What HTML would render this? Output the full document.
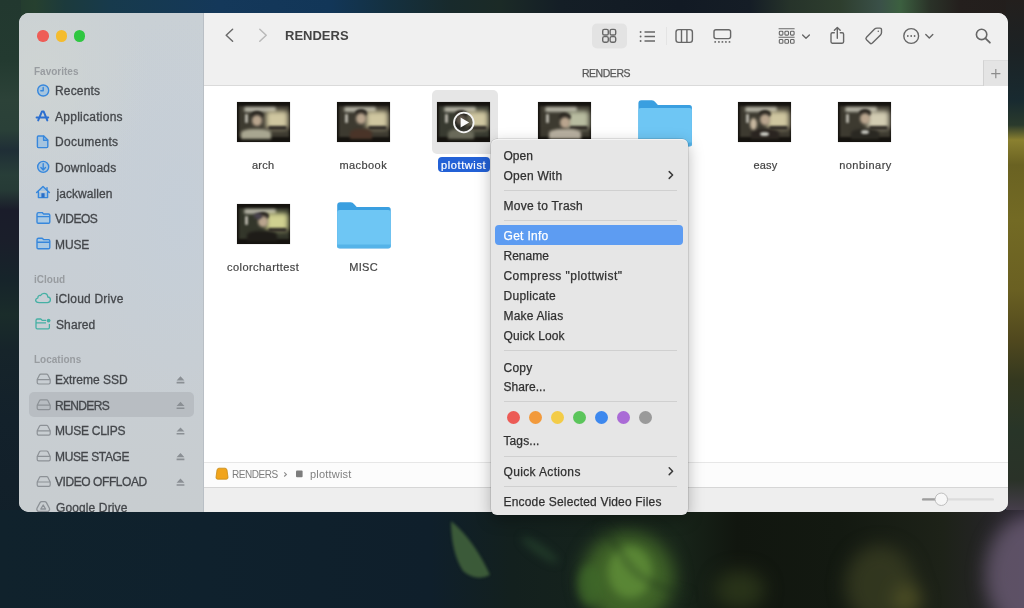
<!DOCTYPE html>
<html><head><meta charset="utf-8">
<style>
*{margin:0;padding:0;box-sizing:border-box}
html,body{width:1024px;height:608px;overflow:hidden}
body{position:relative;font-family:"Liberation Sans",sans-serif;background:#13222c}
.a{position:absolute}
#bg{position:absolute;left:0;top:0;width:1024px;height:608px;overflow:hidden;background:#13212b}
#bgT{position:absolute;left:0;top:0;width:1024px;height:16px;background:linear-gradient(90deg,#22382f 0px,#26402f 35px,#1c3a3c 65px,#173a4c 110px,#14385a 220px,#123658 330px,#14303f 390px,#182a2c 450px,#1b2a26 500px,#141e26 560px,#121a24 680px,#151d26 750px,#26332a 790px,#2e3e2e 840px,#3a5048 880px,#3c6040 900px,#2a3228 930px,#241f1d 960px,#221e1c 1024px)}
#bgL{position:absolute;left:0;top:0;width:21px;height:608px;background:linear-gradient(180deg,#22382f 0px,#233a30 60px,#2c4238 100px,#2a4038 130px,#1f2e36 150px,#283e38 175px,#263a36 190px,#1a1c2a 210px,#1a1e2a 240px,#16242a 280px,#1a2c2a 315px,#16242a 350px,#13212b 420px,#101e28 608px)}
#bgR{position:absolute;left:1006px;top:0;width:18px;height:608px;background:linear-gradient(180deg,#231f1d 0px,#1c2224 50px,#182a30 100px,#2a3a2c 125px,#8a8030 140px,#6a6222 165px,#736a24 220px,#6a6022 290px,#50481e 340px,#34381f 380px,#283528 430px,#2a3228 480px,#4a4050 515px,#5e5068 560px,#4a3e52 608px)}
#bgB{position:absolute;left:0;top:510px;width:1024px;height:98px}
#win{position:absolute;left:19px;top:13px;width:989px;height:499px;border-radius:10px;overflow:hidden;background:#fff;will-change:transform}
#P{position:absolute;left:-19px;top:-13px;width:1024px;height:608px}
#side{position:absolute;left:19px;top:13px;width:185px;height:499px;background:radial-gradient(ellipse 110px 130px at 20px 60px,rgba(208,213,210,.8),rgba(208,213,210,0) 100%),radial-gradient(ellipse 100px 200px at 160px 200px,rgba(196,206,216,.8),rgba(196,206,216,0) 100%),linear-gradient(180deg,#c9d0d5 0%,#c8cfd6 40%,#c8cdd0 100%);border-right:1px solid #b9bfc5}
#tool{position:absolute;left:204px;top:13px;width:804px;height:47px;background:#f0f0f0}
#tabs{position:absolute;left:204px;top:60px;width:804px;height:26px;background:#f0f0f0;border-bottom:1px solid #dadada}
#content{position:absolute;left:204px;top:86px;width:804px;height:376px;background:#fff}
#pathbar{position:absolute;left:204px;top:462px;width:804px;height:25px;background:#fcfcfc;border-top:1px solid #e7e7e7}
#status{position:absolute;left:204px;top:487px;width:804px;height:25px;background:#eeeeee;border-top:1px solid #d6d6d6}
.sh{position:absolute;left:34px;font-size:10px;line-height:12px;font-weight:bold;color:#989ca0;white-space:nowrap}
.si{position:absolute;left:55px;font-size:12px;line-height:14px;color:#44474b;white-space:nowrap;-webkit-text-stroke:.3px #44474b}
.lbl{position:absolute;font-size:11px;line-height:13px;color:#444;white-space:nowrap;-webkit-text-stroke:.2px currentColor}
#menu{will-change:transform;position:absolute;left:491px;top:139px;width:197px;height:376px;background:#e6e6e6;border-radius:6px;box-shadow:inset 0 1px 0 rgba(255,255,255,.55),0 0 0 0.5px rgba(0,0,0,.2),0 5px 16px rgba(0,0,0,.28)}
.mi{position:absolute;left:12.5px;font-size:12px;line-height:14px;color:#303030;white-space:nowrap;-webkit-text-stroke:.25px currentColor}
.sep{position:absolute;left:13px;width:173px;height:1px;background:#d0d0d0}
.thumb{position:absolute;width:53px;height:40px;background:#15130f;overflow:hidden;box-shadow:0 0 1px rgba(0,0,0,.3)}
.thumb b{position:absolute;display:block}
.thumb i{position:absolute;left:0;top:4px;width:54px;height:31px;display:block}
.dot{position:absolute;width:13px;height:13px;border-radius:50%}
.ej{position:absolute;left:176px;width:9px;height:8px}

.t1,.t2,.t3,.t4,.t5,.t6,.t7{background:
 radial-gradient(ellipse 7px 9px at 42% 48%,rgba(205,190,165,.95),rgba(205,190,165,0) 100%),
 radial-gradient(ellipse 13px 11px at 80% 48%,rgba(225,215,160,.95),rgba(225,215,160,0) 100%),
 radial-gradient(ellipse 16px 6px at 35% 22%,rgba(150,150,140,.8),rgba(150,150,140,0) 100%),
 radial-gradient(ellipse 3px 7px at 22% 55%,rgba(190,190,180,.8),rgba(190,190,180,0) 100%),
 linear-gradient(180deg,#2b2a24 0%,#4b4738 45%,#3a3428 80%,#1f1c17 100%)}
</style></head>
<body>
<div id="bg"><div id="bgT"></div><div id="bgL"></div><div id="bgR"></div><svg id="bgB" width="1024" height="98" viewBox="0 510 1024 98">
 <defs><filter id="bl4" x="-50%" y="-50%" width="200%" height="200%" color-interpolation-filters="sRGB"><feGaussianBlur stdDeviation="4"/></filter>
 <filter id="bl15" x="-50%" y="-50%" width="200%" height="200%" color-interpolation-filters="sRGB"><feGaussianBlur stdDeviation="1.6"/></filter>
 <filter id="bl8" x="-50%" y="-50%" width="200%" height="200%" color-interpolation-filters="sRGB"><feGaussianBlur stdDeviation="9"/></filter>
 <linearGradient id="bgbase" x1="0" x2="1" y1="0" y2="0">
  <stop offset="0" stop-color="#10222c"/><stop offset=".2" stop-color="#0f212d"/><stop offset=".42" stop-color="#0f1f2b"/><stop offset=".5" stop-color="#13201e"/>
  <stop offset=".66" stop-color="#18251a"/><stop offset=".72" stop-color="#11160f"/><stop offset=".82" stop-color="#131911"/>
  <stop offset=".92" stop-color="#1d2218"/><stop offset="1" stop-color="#2a2530"/></linearGradient></defs>
 <rect x="0" y="510" width="1024" height="98" fill="url(#bgbase)"/>
 <g filter="url(#bl8)">
  <ellipse cx="628" cy="578" rx="46" ry="46" fill="#48702a" opacity=".85"/>
  <ellipse cx="880" cy="585" rx="35" ry="40" fill="#3d4224" opacity=".7"/><ellipse cx="908" cy="600" rx="14" ry="16" fill="#5a5a28" opacity=".7"/>
  <ellipse cx="1030" cy="575" rx="45" ry="60" fill="#74647e" opacity=".7"/>
  <ellipse cx="740" cy="590" rx="25" ry="20" fill="#2e3a1c" opacity=".8"/>
  
 </g>
 <g filter="url(#bl4)">
  <ellipse cx="630" cy="572" rx="22" ry="26" fill="#6a9c3e" opacity=".6"/>
  
  <ellipse cx="590" cy="585" rx="12" ry="20" fill="#3e6a2a" opacity=".7"/><ellipse cx="540" cy="550" rx="5" ry="22" transform="rotate(-55 540 550)" fill="#2a4a30" opacity=".6"/><path d="M600 528 Q615 540 625 560 Q640 585 690 595" stroke="#1c2e1a" stroke-width="2.5" fill="none" opacity=".8"/>
 </g>
 <path d="M451 521 Q474 540 490 575 Q476 582 463 571 Q451 552 451 521 Z" fill="#3f5e3a" filter="url(#bl15)" opacity=".95"/>
</svg></div>
<div id="win"><div id="P">
 <div id="side"></div>
 <div id="tool"></div>
 <div id="tabs"></div>
 <div id="content"></div>
 <div id="pathbar"></div>
 <div id="status"></div>
 <!-- tab bar -->
 <div class="a" style="left:204px;width:804px;top:67px;text-align:center;font-size:10.5px;line-height:12px;color:#585858;letter-spacing:-.45px;-webkit-text-stroke:.25px #585858">RENDERS</div>
 <div class="a" style="left:983px;top:60px;width:25px;height:26px;background:#e4e4e4;border-left:1px solid #d2d2d2;border-top:1px solid #dcdcdc"></div>


 <div class="a" style="left:29px;top:392px;width:165px;height:25px;border-radius:5px;background:#b8bdc2"></div>
 <!-- thumbnails -->
 <div class="a" style="left:432px;top:90px;width:66px;height:64px;border-radius:5px;background:#e6e6e6"></div>
<div class="thumb" style="left:237px;top:102px"><b style="left:2px;top:4px;width:50px;height:31px;background:#3d3a30;filter:blur(1px)"></b><b style="left:7px;top:5px;width:32px;height:5px;background:#b2b0a2;filter:blur(1.6px);border-radius:2px"></b><b style="left:29px;top:9px;width:22px;height:18px;background:#cfc6a0;filter:blur(2.4px);border-radius:3px"></b><b style="left:31px;top:24px;width:19px;height:4px;background:#34302a;filter:blur(1.2px);border-radius:2px"></b><b style="left:8px;top:12px;width:3px;height:9px;background:#b5b3a8;filter:blur(0.9px);border-radius:1px"></b><b style="left:4px;top:27px;width:30px;height:10px;background:#a8a690;filter:blur(1.6px);border-radius:40% 40% 0 0"></b><b style="left:14px;top:9px;width:12px;height:8px;background:#2a2620;filter:blur(1.3px);border-radius:50%"></b><b style="left:15px;top:13px;width:10px;height:11px;background:#b9a58e;filter:blur(1.4px);border-radius:50%"></b></div>
<div class="thumb" style="left:337px;top:102px"><b style="left:2px;top:4px;width:50px;height:31px;background:#3d3a30;filter:blur(1px)"></b><b style="left:7px;top:5px;width:32px;height:5px;background:#b2b0a2;filter:blur(1.6px);border-radius:2px"></b><b style="left:29px;top:9px;width:22px;height:18px;background:#cfc6a0;filter:blur(2.4px);border-radius:3px"></b><b style="left:31px;top:24px;width:19px;height:4px;background:#34302a;filter:blur(1.2px);border-radius:2px"></b><b style="left:8px;top:12px;width:3px;height:9px;background:#b5b3a8;filter:blur(0.9px);border-radius:1px"></b><b style="left:13px;top:27px;width:22px;height:10px;background:#4a3428;filter:blur(1.6px);border-radius:40% 40% 0 0"></b><b style="left:18px;top:7px;width:12px;height:8px;background:#2a2620;filter:blur(1.3px);border-radius:50%"></b><b style="left:19px;top:11px;width:10px;height:11px;background:#b9a58e;filter:blur(1.4px);border-radius:50%"></b></div>
<div class="thumb" style="left:437px;top:102px"><b style="left:2px;top:4px;width:50px;height:31px;background:#383a30;filter:blur(1px)"></b><b style="left:7px;top:5px;width:32px;height:5px;background:#b2b0a2;filter:blur(1.6px);border-radius:2px"></b><b style="left:29px;top:9px;width:22px;height:18px;background:#cfc6a0;filter:blur(2.4px);border-radius:3px"></b><b style="left:31px;top:24px;width:19px;height:4px;background:#34302a;filter:blur(1.2px);border-radius:2px"></b><b style="left:8px;top:12px;width:3px;height:9px;background:#b5b3a8;filter:blur(0.9px);border-radius:1px"></b><b style="left:11px;top:27px;width:26px;height:10px;background:#6a6a5a;filter:blur(1.6px);border-radius:40% 40% 0 0"></b><b style="left:18px;top:8px;width:12px;height:8px;background:#2a2620;filter:blur(1.3px);border-radius:50%"></b><b style="left:19px;top:12px;width:10px;height:11px;background:#b9a58e;filter:blur(1.4px);border-radius:50%"></b></div>
<div class="thumb" style="left:538px;top:102px"><b style="left:2px;top:4px;width:50px;height:31px;background:#3d3a30;filter:blur(1px)"></b><b style="left:7px;top:5px;width:32px;height:5px;background:#b2b0a2;filter:blur(1.6px);border-radius:2px"></b><b style="left:29px;top:9px;width:22px;height:18px;background:#b8bca0;filter:blur(2.4px);border-radius:3px"></b><b style="left:31px;top:24px;width:19px;height:4px;background:#34302a;filter:blur(1.2px);border-radius:2px"></b><b style="left:8px;top:12px;width:3px;height:9px;background:#b5b3a8;filter:blur(0.9px);border-radius:1px"></b><b style="left:11px;top:27px;width:32px;height:10px;background:#b8b0a0;filter:blur(1.6px);border-radius:40% 40% 0 0"></b><b style="left:21px;top:11px;width:12px;height:8px;background:#2a2620;filter:blur(1.3px);border-radius:50%"></b><b style="left:22px;top:15px;width:10px;height:11px;background:#b9a58e;filter:blur(1.4px);border-radius:50%"></b></div>
<div class="thumb" style="left:738px;top:102px"><b style="left:2px;top:4px;width:50px;height:31px;background:#3d3a30;filter:blur(1px)"></b><b style="left:7px;top:5px;width:32px;height:5px;background:#b2b0a2;filter:blur(1.6px);border-radius:2px"></b><b style="left:29px;top:9px;width:22px;height:18px;background:#cfc6a0;filter:blur(2.4px);border-radius:3px"></b><b style="left:31px;top:24px;width:19px;height:4px;background:#34302a;filter:blur(1.2px);border-radius:2px"></b><b style="left:8px;top:12px;width:3px;height:9px;background:#b5b3a8;filter:blur(0.9px);border-radius:1px"></b><b style="left:13px;top:27px;width:28px;height:10px;background:#2a2420;filter:blur(1.6px);border-radius:40% 40% 0 0"></b><b style="left:21px;top:8px;width:12px;height:8px;background:#2a2620;filter:blur(1.3px);border-radius:50%"></b><b style="left:22px;top:12px;width:10px;height:11px;background:#b9a58e;filter:blur(1.4px);border-radius:50%"></b><b style="left:12px;top:16px;width:7px;height:12px;background:#c8b8a0;filter:blur(1.4px);border-radius:50%"></b><b style="left:22px;top:30px;width:9px;height:4px;background:#c8c8c0;filter:blur(1px);border-radius:50%"></b></div>
<div class="thumb" style="left:838px;top:102px"><b style="left:2px;top:4px;width:50px;height:31px;background:#3d3a30;filter:blur(1px)"></b><b style="left:7px;top:5px;width:32px;height:5px;background:#b2b0a2;filter:blur(1.6px);border-radius:2px"></b><b style="left:29px;top:9px;width:22px;height:18px;background:#d2ccb2;filter:blur(2.4px);border-radius:3px"></b><b style="left:31px;top:24px;width:19px;height:4px;background:#34302a;filter:blur(1.2px);border-radius:2px"></b><b style="left:8px;top:12px;width:3px;height:9px;background:#b5b3a8;filter:blur(0.9px);border-radius:1px"></b><b style="left:13px;top:27px;width:28px;height:10px;background:#2a2822;filter:blur(1.6px);border-radius:40% 40% 0 0"></b><b style="left:21px;top:7px;width:12px;height:8px;background:#2a2620;filter:blur(1.3px);border-radius:50%"></b><b style="left:22px;top:11px;width:10px;height:11px;background:#b9a58e;filter:blur(1.4px);border-radius:50%"></b><b style="left:23px;top:28px;width:8px;height:4px;background:#c0c0b8;filter:blur(1px);border-radius:50%"></b></div>
<div class="thumb" style="left:237px;top:204px"><b style="left:2px;top:4px;width:50px;height:31px;background:#33362a;filter:blur(1px)"></b><b style="left:7px;top:5px;width:32px;height:5px;background:#b2b0a2;filter:blur(1.6px);border-radius:2px"></b><b style="left:29px;top:9px;width:22px;height:18px;background:#d0d090;filter:blur(2.4px);border-radius:3px"></b><b style="left:31px;top:24px;width:19px;height:4px;background:#34302a;filter:blur(1.2px);border-radius:2px"></b><b style="left:8px;top:12px;width:3px;height:9px;background:#b5b3a8;filter:blur(0.9px);border-radius:1px"></b><b style="left:10px;top:27px;width:30px;height:10px;background:#1e1c18;filter:blur(1.6px);border-radius:40% 40% 0 0"></b><b style="left:20px;top:8px;width:12px;height:8px;background:#2a2620;filter:blur(1.3px);border-radius:50%"></b><b style="left:21px;top:12px;width:10px;height:11px;background:#b9a58e;filter:blur(1.4px);border-radius:50%"></b><b style="left:17px;top:9px;width:8px;height:6px;background:#4a4450;filter:blur(1.5px);border-radius:50%"></b></div>

 <!-- icons overlay -->
 <svg class="a" style="left:0;top:0" width="1024" height="608" viewBox="0 0 1024 608">
  
  <g transform="translate(337.2 202)">
    <path d="M0 3.2 Q0 0.2 3 0.2 H13.5 Q15.5 0.2 17 2.2 L19.5 5 H51 Q53.5 5 53.5 7.5 V44 Q53.5 46.5 51 46.5 H2.5 Q0 46.5 0 44 Z" fill="#3a9fe0"/>
    <path d="M0 10.5 Q0 8 2.5 8 H51 Q53.5 8 53.5 10.5 V43.5 Q53.5 46 51 46 H2.5 Q0 46 0 43.5 Z" fill="#6ec6f4"/>
    <path d="M0 42.5 H53.5 V43.5 Q53.5 46 51 46 H2.5 Q0 46 0 43.5 Z" fill="#55b3e8"/>
   </g>
  <g transform="translate(638.4 100)">
    <path d="M0 3.2 Q0 0.2 3 0.2 H13.5 Q15.5 0.2 17 2.2 L19.5 5 H51 Q53.5 5 53.5 7.5 V44 Q53.5 46.5 51 46.5 H2.5 Q0 46.5 0 44 Z" fill="#3a9fe0"/>
    <path d="M0 10.5 Q0 8 2.5 8 H51 Q53.5 8 53.5 10.5 V43.5 Q53.5 46 51 46 H2.5 Q0 46 0 43.5 Z" fill="#6ec6f4"/>
    <path d="M0 42.5 H53.5 V43.5 Q53.5 46 51 46 H2.5 Q0 46 0 43.5 Z" fill="#55b3e8"/>
   </g>

  <!-- play overlay -->
  <circle cx="463.8" cy="122.5" r="9.8" fill="rgba(20,20,20,.55)" stroke="#f4f4f4" stroke-width="1.8"/>
  <path d="M460.6 117.4 L469.2 122.5 L460.6 127.6 Z" fill="#fafafa"/>

  <!-- toolbar icons -->
  <g fill="none" stroke="#6b6b6b" stroke-width="1.5" stroke-linecap="round" stroke-linejoin="round">
   <polyline points="232.6,29.3 226.2,35.3 232.6,41.3"/>
   <polyline points="259.8,29.3 266.2,35.3 259.8,41.3" stroke="#b9b9b9"/>
  </g>
  <rect x="592" y="23.5" width="35" height="25" rx="5" fill="#e3e3e3"/>
  <g fill="none" stroke="#676767" stroke-width="1.4">
   <rect x="602.7" y="29.4" width="5.6" height="5.6" rx="1.6"/>
   <rect x="610.1" y="29.4" width="5.6" height="5.6" rx="1.6"/>
   <rect x="602.7" y="36.6" width="5.6" height="5.6" rx="1.6"/>
   <rect x="610.1" y="36.6" width="5.6" height="5.6" rx="1.6"/>
   <path d="M644.5 32 H655 M644.5 36.5 H655 M644.5 41 H655"/>
   <rect x="676" y="29.6" width="16.4" height="12.8" rx="2.6"/>
   <path d="M681.5 29.6 V42.4 M686.9 29.6 V42.4"/>
   <rect x="714" y="29.8" width="16.6" height="8.8" rx="2"/>
   <path d="M778.6 28.8 H794.6 M778.6 37.3 H794.6" stroke-width="1.1"/>
   <rect x="779.3" y="31.3" width="3.6" height="3.8" rx=".9" stroke-width="1.1"/>
   <rect x="784.9" y="31.3" width="3.6" height="3.8" rx=".9" stroke-width="1.1"/>
   <rect x="790.5" y="31.3" width="3.6" height="3.8" rx=".9" stroke-width="1.1"/>
   <rect x="779.3" y="39.5" width="3.6" height="3.8" rx=".9" stroke-width="1.1"/>
   <rect x="784.9" y="39.5" width="3.6" height="3.8" rx=".9" stroke-width="1.1"/>
   <rect x="790.5" y="39.5" width="3.6" height="3.8" rx=".9" stroke-width="1.1"/>
   <polyline points="802.6,35 806,38.2 809.4,35" stroke-linecap="round" stroke-linejoin="round"/>
   <path d="M834.3 32.8 H832.4 Q831 32.8 831 34.2 V41.8 Q831 43.2 832.4 43.2 H842.2 Q843.6 43.2 843.6 41.8 V34.2 Q843.6 32.8 842.2 32.8 H840.3" stroke-linecap="round"/>
   <path d="M837.3 38.2 V27.6 M834.4 30.3 L837.3 27.4 L840.2 30.3" stroke-linecap="round" stroke-linejoin="round"/>
   <path d="M866.5 37.2 L874.6 29.1 Q875.6 28.1 877 28.1 H880 Q881.5 28.1 881.5 29.6 V32.6 Q881.5 34 880.5 35 L872.4 43.1 Q871.1 44.3 869.9 43.1 L866.5 39.7 Q865.3 38.4 866.5 37.2 Z" stroke-linejoin="round"/>
   <circle cx="911.2" cy="36" r="7.4"/>
   <polyline points="925.8,34.6 929.3,38 932.8,34.6" stroke-linecap="round" stroke-linejoin="round"/>
   <circle cx="981.6" cy="34.4" r="5.2" stroke-width="1.6"/>
   <path d="M985.5 38.3 L989.9 42.7" stroke-width="1.8" stroke-linecap="round"/>
   <path d="M995.8 69 V78.2 M991.2 73.6 H1000.4" stroke="#8c8c8c" stroke-width="1.2"/>
  </g>
  <g fill="#676767">
   <circle cx="640.6" cy="32" r=".95"/><circle cx="640.6" cy="36.5" r=".95"/><circle cx="640.6" cy="41" r=".95"/>
   <circle cx="715.2" cy="41.9" r=".95"/><circle cx="718.9" cy="41.9" r=".95"/><circle cx="722.4" cy="41.9" r=".95"/><circle cx="725.9" cy="41.9" r=".95"/><circle cx="729.5" cy="41.9" r=".95"/>
   <circle cx="907.8" cy="36" r=".9"/><circle cx="911.2" cy="36" r=".9"/><circle cx="914.6" cy="36" r=".9"/>
   <circle cx="878.3" cy="31.2" r=".8"/>
  </g>
  <line x1="666.5" y1="27" x2="666.5" y2="45" stroke="#e4e4e4" stroke-width="1"/>

  <!-- sidebar icons -->
  <g fill="none" stroke="#3787dc" stroke-width="1.4" stroke-linecap="round" stroke-linejoin="round">
   <circle cx="43.2" cy="90.5" r="5.5" fill="rgba(120,180,235,.45)"/>
   <path d="M43.2 87.4 V90.8 H40.8"/>
   <path d="M38.2 120.4 L41.9 111.6 H43.7 L47.3 120.4 M36.6 117.4 H48.2" stroke="#2c6fd0" stroke-width="2"/>
   <path d="M38.3 136 H43.8 L47.8 140 V146.6 Q47.8 147.6 46.8 147.6 H38.3 Q37.4 147.6 37.4 146.6 V136.9 Q37.4 136 38.3 136 Z" fill="rgba(120,180,235,.45)"/>
   <path d="M43.6 136.2 V140.2 H47.6"/>
   <circle cx="43.2" cy="166.9" r="5.5" fill="rgba(120,180,235,.45)"/>
   <path d="M43.2 163.6 V169.6 M40.9 167.6 L43.2 169.9 L45.5 167.6"/>
   <path d="M36.6 192.6 L43 186.6 L49.4 192.6 M38.4 191 V197.6 H47.6 V191" fill="rgba(120,180,235,.45)"/>
   <path d="M47 187.8 V190"/>
  </g>
  <rect x="41.4" y="193.2" width="3.2" height="4.4" fill="#2a6fc8"/>
  <g stroke="#3787dc" stroke-width="1.4" stroke-linejoin="round">
   <path d="M37 214.3 Q37 212.6 38.6 212.6 H42.2 L43.6 214 H48.6 Q49.8 214 49.8 215.3 V222 Q49.8 223.2 48.6 223.2 H38.2 Q37 223.2 37 222 Z" fill="rgba(140,195,240,.5)"/>
   <path d="M37 216.6 H49.8" fill="none"/>
   <path d="M37 239.9 Q37 238.2 38.6 238.2 H42.2 L43.6 239.6 H48.6 Q49.8 239.6 49.8 240.9 V247.6 Q49.8 248.8 48.6 248.8 H38.2 Q37 248.8 37 247.6 Z" fill="rgba(140,195,240,.5)"/>
   <path d="M37 242.2 H49.8" fill="none"/>
  </g>
  <g fill="none" stroke="#45b0a4" stroke-width="1.3" stroke-linejoin="round">
   <path d="M39.2 302.6 H47.4 Q50.4 302.6 50.4 299.8 Q50.4 297.2 47.8 297 Q47.6 293.3 44 293.3 Q41.6 293.3 40.6 295.6 Q39.8 295.3 39 295.6 Q37.6 296.2 37.9 297.8 Q35.6 298.4 35.6 300.3 Q35.8 302.6 39.2 302.6 Z"/>
   <path d="M36 320.6 Q36 319 37.6 319 H40.8 L42.2 320.4 H46 M36 322.8 H46 M36 320.6 V327.6 Q36 328.8 37.2 328.8 H48.2 Q49.4 328.8 49.4 327.6 V324"/>
  </g>
  <circle cx="48.6" cy="320.6" r="1.9" fill="#45b0a4"/>
  <g fill="none" stroke="#8c9196" stroke-width="1.2" stroke-linejoin="round">
   <path d="M37.2 379.6 L39.6 374.8 Q40 374.2 40.8 374.2 H46.6 Q47.4 374.2 47.8 374.8 L50.2 379.6 V382.6 Q50.2 384 48.8 384 H38.6 Q37.2 384 37.2 382.6 Z M37.2 379.6 H50.2"/>
   <path transform="translate(0 25.6)" d="M37.2 379.6 L39.6 374.8 Q40 374.2 40.8 374.2 H46.6 Q47.4 374.2 47.8 374.8 L50.2 379.6 V382.6 Q50.2 384 48.8 384 H38.6 Q37.2 384 37.2 382.6 Z M37.2 379.6 H50.2"/>
   <path transform="translate(0 51.2)" d="M37.2 379.6 L39.6 374.8 Q40 374.2 40.8 374.2 H46.6 Q47.4 374.2 47.8 374.8 L50.2 379.6 V382.6 Q50.2 384 48.8 384 H38.6 Q37.2 384 37.2 382.6 Z M37.2 379.6 H50.2"/>
   <path transform="translate(0 76.8)" d="M37.2 379.6 L39.6 374.8 Q40 374.2 40.8 374.2 H46.6 Q47.4 374.2 47.8 374.8 L50.2 379.6 V382.6 Q50.2 384 48.8 384 H38.6 Q37.2 384 37.2 382.6 Z M37.2 379.6 H50.2"/>
   <path transform="translate(0 102.4)" d="M37.2 379.6 L39.6 374.8 Q40 374.2 40.8 374.2 H46.6 Q47.4 374.2 47.8 374.8 L50.2 379.6 V382.6 Q50.2 384 48.8 384 H38.6 Q37.2 384 37.2 382.6 Z M37.2 379.6 H50.2"/>
   <path d="M40 502.6 Q40.6 501.6 41.8 501.6 H44.6 Q45.8 501.6 46.4 502.6 L49.4 508.2 Q49.9 509.4 49.2 510.4 L48.4 511.3 H38 L37.2 510.4 Q36.5 509.4 37 508.2 Z M40.8 509 L43.2 505 L45.6 509 Z" stroke-width="1.3"/>
  </g>
  <g fill="#8a8f94">
   <path d="M176.6 380.4 L180.5 376.2 L184.4 380.4 Z M176.6 381.8 H184.4 V383.4 H176.6 Z"/>
   <path transform="translate(0 25.6)" d="M176.6 380.4 L180.5 376.2 L184.4 380.4 Z M176.6 381.8 H184.4 V383.4 H176.6 Z"/>
   <path transform="translate(0 51.2)" d="M176.6 380.4 L180.5 376.2 L184.4 380.4 Z M176.6 381.8 H184.4 V383.4 H176.6 Z"/>
   <path transform="translate(0 76.8)" d="M176.6 380.4 L180.5 376.2 L184.4 380.4 Z M176.6 381.8 H184.4 V383.4 H176.6 Z"/>
   <path transform="translate(0 102.4)" d="M176.6 380.4 L180.5 376.2 L184.4 380.4 Z M176.6 381.8 H184.4 V383.4 H176.6 Z"/>
  </g>

  <!-- path bar icons -->
  <path d="M217 470 Q217.4 468.2 219 468.2 H225 Q226.6 468.2 227 470 L228 477.4 Q228 479.2 226.4 479.2 H217.6 Q216 479.2 216 477.4 Z" fill="#f1a41b" stroke="#c68a16" stroke-width=".8"/>
  <polyline points="284.2,472.3 286.4,474.4 284.2,476.5" fill="none" stroke="#8a8a8a" stroke-width="1.1"/>
  <rect x="296" y="470.5" width="6.6" height="6.8" rx="1" fill="#7c7c7c"/>

  <!-- slider -->
  <rect x="922" y="498.2" width="72" height="2.4" rx="1.2" fill="#dcdcdc"/>
  <rect x="922" y="498.2" width="16" height="2.4" rx="1.2" fill="#9e9e9e"/>
  <circle cx="941.3" cy="499.3" r="6.2" fill="#f7f7f7" stroke="#b8b8b8" stroke-width=".9"/>
 </svg>

 <!-- traffic lights -->
 <div class="a" style="left:37.4px;top:30.4px;width:11.4px;height:11.4px;border-radius:50%;background:#ee5d57"></div>
 <div class="a" style="left:55.6px;top:30.4px;width:11.4px;height:11.4px;border-radius:50%;background:#f4bc2e"></div>
 <div class="a" style="left:73.8px;top:30.4px;width:11.4px;height:11.4px;border-radius:50%;background:#2fc741"></div>

 <!-- sidebar -->
 <div class="sh" style="top:66px">Favorites</div>
 <div class="si" style="top:84px;letter-spacing:0.17px">Recents</div>
 <div class="si" style="top:110px;letter-spacing:0.26px">Applications</div>
 <div class="si" style="top:135px;letter-spacing:0.3px">Documents</div>
 <div class="si" style="top:161px;letter-spacing:0.24px">Downloads</div>
 <div class="si" style="left:56.5px;top:187px;letter-spacing:0.05px">jackwallen</div>
 <div class="si" style="top:212px;letter-spacing:-0.52px">VIDEOS</div>
 <div class="si" style="top:238px;letter-spacing:-0.1px">MUSE</div>
 <div class="sh" style="top:274px">iCloud</div>
 <div class="si" style="left:55.6px;top:292px;letter-spacing:0.22px">iCloud Drive</div>
 <div class="si" style="left:56px;top:318px;letter-spacing:0.1px">Shared</div>
 <div class="sh" style="top:354px">Locations</div>
 <div class="si" style="top:373px;letter-spacing:0.01px">Extreme SSD</div>
 <div class="si" style="top:399px;letter-spacing:-0.67px">RENDERS</div>
 <div class="si" style="top:424px;letter-spacing:-0.25px">MUSE CLIPS</div>
 <div class="si" style="top:450px;letter-spacing:-0.36px">MUSE STAGE</div>
 <div class="si" style="top:475px;letter-spacing:-0.43px">VIDEO OFFLOAD</div>
 <div class="si" style="left:56px;top:501px;letter-spacing:0.12px">Google Drive</div>

 <!-- toolbar -->
 <div class="a" style="left:285px;top:28px;font-size:13px;line-height:15px;font-weight:bold;color:#444">RENDERS</div>

 <!-- content labels -->
 <div class="lbl" style="left:252px;top:159px;letter-spacing:0.2px">arch</div>
 <div class="lbl" style="left:339.5px;top:159px;letter-spacing:0.42px">macbook</div>
 <div class="a" style="left:438px;top:157px;width:52px;height:15px;border-radius:4px;background:#2361d6"></div>
 <div class="lbl" style="left:441px;top:159px;letter-spacing:0.6px;color:#fff">plottwist</div>
 <div class="lbl" style="left:753.4px;top:159px;letter-spacing:0.23px">easy</div>
 <div class="lbl" style="left:839.2px;top:159px;letter-spacing:0.47px">nonbinary</div>
 <div class="lbl" style="left:227px;top:261px;letter-spacing:0.45px">colorcharttest</div>
 <div class="lbl" style="left:349.2px;top:261px;letter-spacing:0.33px">MISC</div>

 <!-- path bar -->
 <div class="a" style="left:232px;top:469px;font-size:10px;line-height:12px;color:#7c7c7c;letter-spacing:-.45px">RENDERS</div>
 <div class="a" style="left:310px;top:468px;font-size:11px;line-height:12px;color:#808080;letter-spacing:.2px">plottwist</div>
</div></div>

<div id="menu">
 <div class="mi" style="top:10px;letter-spacing:0px">Open</div>
 <div class="mi" style="top:30px;letter-spacing:0.24px">Open With</div>
 <div class="sep" style="top:51px"></div>
 <div class="mi" style="top:60px;letter-spacing:0.27px">Move to Trash</div>
 <div class="sep" style="top:81px"></div>
 <div class="a" style="left:4px;top:86px;width:188px;height:20px;border-radius:4px;background:#5d9cf2"></div>
 <div class="mi" style="top:90px;letter-spacing:0.3px;color:#fff">Get Info</div>
 <div class="mi" style="top:110px;letter-spacing:0px">Rename</div>
 <div class="mi" style="top:130px;letter-spacing:0.45px">Compress "plottwist"</div>
 <div class="mi" style="top:150px;letter-spacing:0.28px">Duplicate</div>
 <div class="mi" style="top:170px;letter-spacing:0.18px">Make Alias</div>
 <div class="mi" style="top:190px;letter-spacing:0.11px">Quick Look</div>
 <div class="sep" style="top:211px"></div>
 <div class="mi" style="top:222px;letter-spacing:0.25px">Copy</div>
 <div class="mi" style="top:241px;letter-spacing:0.03px">Share...</div>
 <div class="sep" style="top:262px"></div>

 <div class="dot" style="left:16px;top:271.5px;background:#ec5b56"></div>
 <div class="dot" style="left:38px;top:271.5px;background:#f29a3c"></div>
 <div class="dot" style="left:60px;top:271.5px;background:#f3cc48"></div>
 <div class="dot" style="left:82px;top:271.5px;background:#5bc55b"></div>
 <div class="dot" style="left:104px;top:271.5px;background:#3d88ee"></div>
 <div class="dot" style="left:126px;top:271.5px;background:#aa6bd6"></div>
 <div class="dot" style="left:148px;top:271.5px;background:#9a9a9a"></div>
 <svg class="a" style="left:0;top:0" width="197" height="376"><g fill="none" stroke="#3a3a3a" stroke-width="1.5" stroke-linecap="round" stroke-linejoin="round"><polyline points="178.2,32.6 181.6,36 178.2,39.4"/><polyline points="178.2,328.8 181.6,332.2 178.2,335.6"/></g></svg>
 <div class="mi" style="top:295px;letter-spacing:0.1px">Tags...</div>
 <div class="sep" style="top:317px"></div>
 <div class="mi" style="top:326px;letter-spacing:0.35px">Quick Actions</div>
 <div class="sep" style="top:347px"></div>
 <div class="mi" style="top:356px;letter-spacing:0.18px">Encode Selected Video Files</div>
</div>
</body></html>
